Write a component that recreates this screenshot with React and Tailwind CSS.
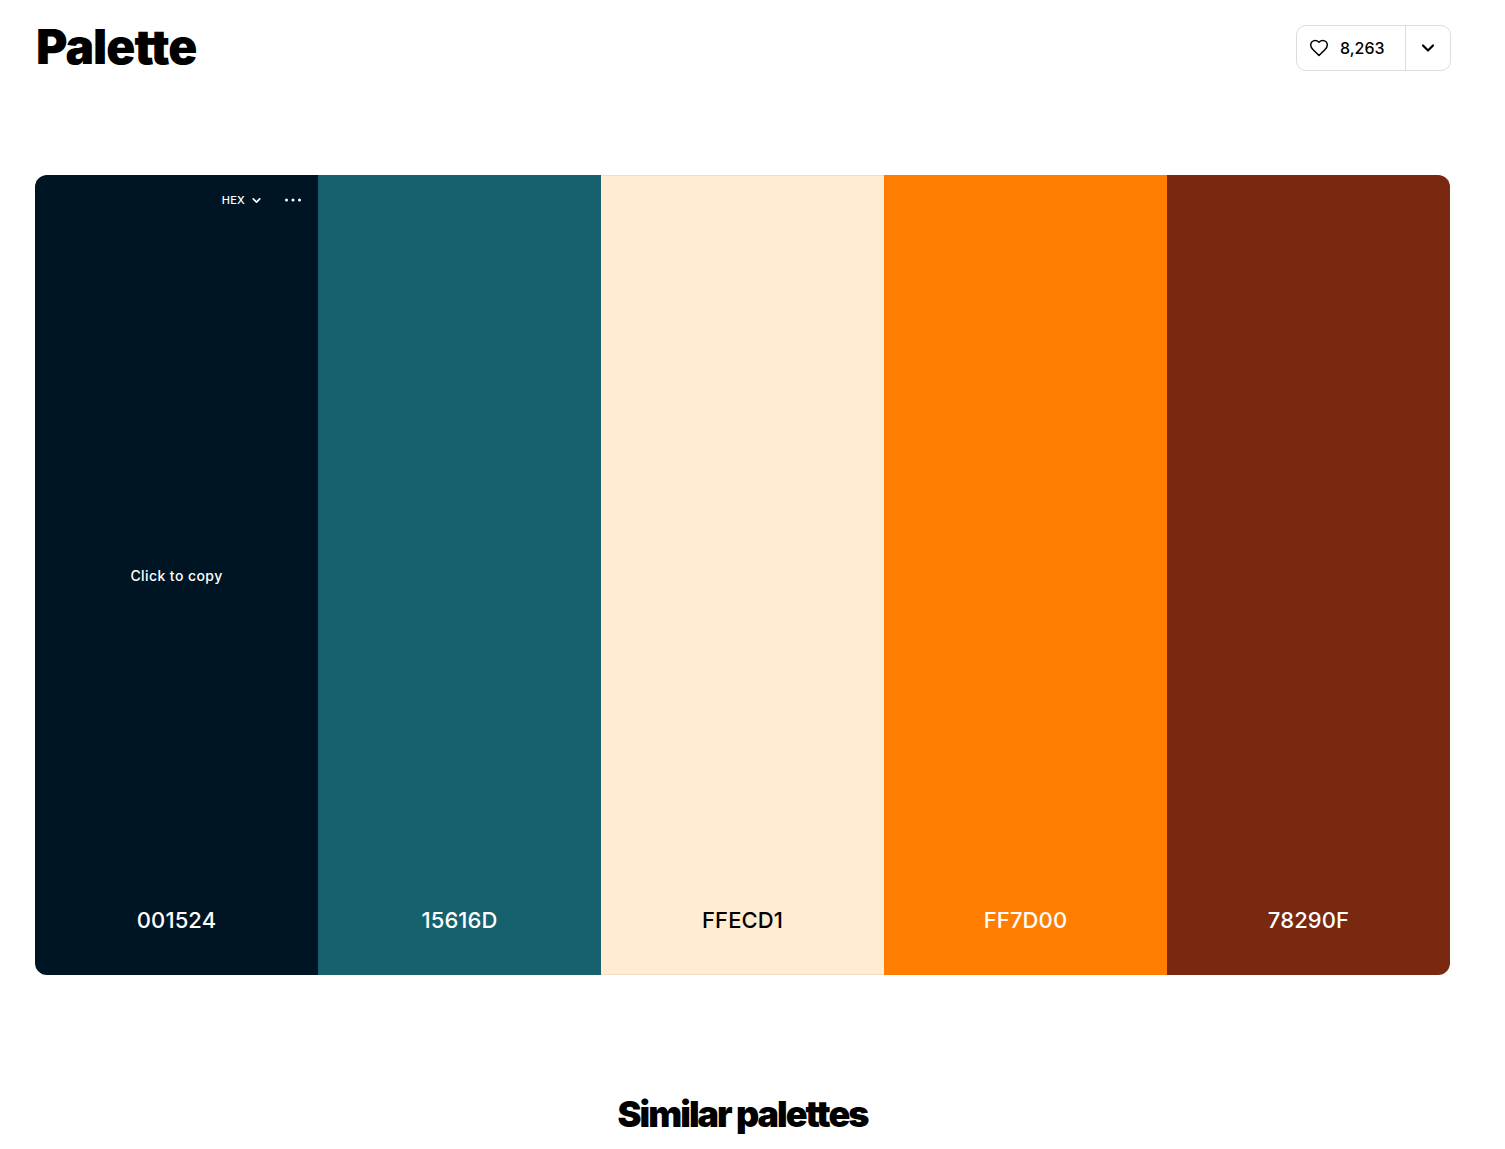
import React from "react";

const swatches = [
  { hex: "001524", bg: "bg-[#001524]", text: "text-white", pb: "pb-[41px]" },
  { hex: "15616D", bg: "bg-[#15616d]", text: "text-white", pb: "pb-[41px]" },
  { hex: "FFECD1", bg: "bg-[#ffecd1] border-y border-[#f1dfc4]", text: "text-black", pb: "pb-[40px]" },
  { hex: "FF7D00", bg: "bg-[#ff7d00]", text: "text-white", pb: "pb-[41px]" },
  { hex: "78290F", bg: "bg-[#78290f]", text: "text-white", pb: "pb-[41px]" },
];

export default function App() {
  return (
    <div className="h-[1149px] overflow-hidden bg-white pr-[55px] pl-[35px] font-['Inter',sans-serif] text-black">
      <header className="flex h-[175px] items-start justify-between">
        <h1 className="mt-[17px] ml-[1px] text-[48px] leading-[60px] font-black tracking-[-0.02em]">Palette</h1>
        <div className="mt-[25px] mr-[-1px] flex h-[46px] w-[155px] items-center rounded-[10px] border border-[#dcdcdc] text-black">
          <div className="flex h-full w-[109px] items-center border-r border-[#dcdcdc] pl-[12px]">
            <svg width="20" height="20" viewBox="0 0 24 24" fill="none" stroke="currentColor" strokeWidth="1.8" strokeLinecap="round" strokeLinejoin="round">
              <path d="M19 14c1.49-1.46 3-3.21 3-5.5A5.5 5.5 0 0 0 16.5 3c-1.76 0-3 .5-4.5 2-1.5-1.5-2.74-2-4.5-2A5.5 5.5 0 0 0 2 8.5c0 2.3 1.5 4.05 3 5.5l7 7Z" />
            </svg>
            <span className="ml-[11px] text-[16px] leading-5 font-[550]">8,263</span>
          </div>
          <div className="flex flex-1 items-center justify-center">
            <svg width="20" height="20" viewBox="0 0 24 24" fill="none" stroke="currentColor" strokeWidth="2.6" strokeLinecap="round" strokeLinejoin="round">
              <path d="m6 9 6 6 6-6" />
            </svg>
          </div>
        </div>
      </header>

      <main className="flex h-[800px] overflow-hidden rounded-[12px]">
        {swatches.map((s, i) => (
          <div key={s.hex} className={`relative flex flex-1 flex-col items-center justify-end ${s.pb} ${s.bg} ${s.text}`}>
            {i === 0 && (
              <>
                <div className="absolute top-[17px] right-[15px] flex items-center text-white">
                  <span className="text-[11px] leading-4 font-[550] tracking-[0.02em]">HEX</span>
                  <svg className="ml-[5px]" width="13" height="13" viewBox="0 0 24 24" fill="none" stroke="currentColor" strokeWidth="3" strokeLinecap="round" strokeLinejoin="round">
                    <path d="m6 9 6 6 6-6" />
                  </svg>
                  <svg className="ml-[20px]" width="20" height="16" viewBox="0 0 20 16" fill="currentColor">
                    <circle cx="3.5" cy="8" r="1.5" />
                    <circle cx="10" cy="8" r="1.5" />
                    <circle cx="16.5" cy="8" r="1.5" />
                  </svg>
                </div>
                <div className="absolute top-[391px] left-0 w-full text-center text-[14px] leading-5 font-[550] tracking-[0.03em]">Click to copy</div>
              </>
            )}
            <span className="text-[22px] leading-7 font-[550] tracking-[0.005em]">{s.hex}</span>
          </div>
        ))}
      </main>

      <h2 className="mt-[115px] text-center text-[36px] leading-[48px] font-black tracking-[-0.055em]">Similar palettes</h2>
    </div>
  );
}
